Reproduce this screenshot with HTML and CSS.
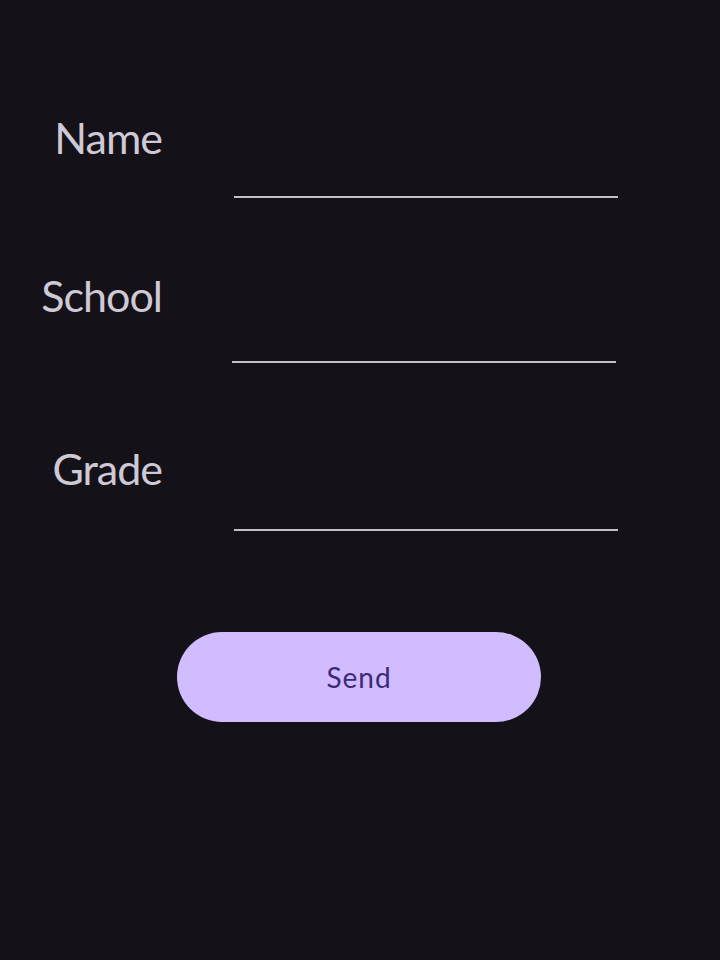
FILE: index.html
```html
<!DOCTYPE html>
<html lang="en">
<head>
    <meta charset="UTF-8">
    <title>Student Form</title>
    <link rel="stylesheet" href="styles.css">
</head>
<body>

<div id="form">
    <div class="field field-name">
        <label for="name">Name</label>
        <input id="name" type="text">
    </div>
    <div class="field field-school">
        <label for="school">School</label>
        <input id="school" type="text">
    </div>
    <div class="field field-grade">
        <label for="grade">Grade</label>
        <input id="grade" type="text">
    </div>
    <div class="actions">
        <button type="button">Send</button>
    </div>
</div>

</body>
</html>
```

FILE: styles.css
```css
body, html {
    margin:0;
    padding:0;
    background:#141218;
    color:#cfc9d5;
    font-family:Lato, "Open Sans", sans-serif;
}
#form {
    padding-top:114px;
}
.field {
    display:flex;
    align-items:flex-start;
}
.field label {
    width:162px;
    text-align:right;
    font-size:43px;
    line-height:48px;
    letter-spacing:-1px;
}
.field input {
    width:384px;
    height:40px;
    margin-left:72px;
    padding:0;
    border:0;
    border-bottom:2px solid #c4bec9;
    background:transparent;
    color:#cfc9d5;
    font:inherit;
    font-size:24px;
    outline:none;
}
.field-name input {
    margin-top:42px;
}
.field-school {
    margin-top:74px;
}
.field-school input {
    margin-left:70px;
    margin-top:49px;
}
.field-grade {
    margin-top:82px;
}
.field-grade input {
    margin-top:44px;
}
.actions {
    display:flex;
    justify-content:center;
    padding-right:2px;
    margin-top:101px;
}
.actions button {
    width:364px;
    height:90px;
    border:0;
    border-radius:45px;
    background:#d0bcff;
    color:#3b2a78;
    font-family:Lato, "Open Sans", sans-serif;
    font-size:28px;
    letter-spacing:1px;
}
```
